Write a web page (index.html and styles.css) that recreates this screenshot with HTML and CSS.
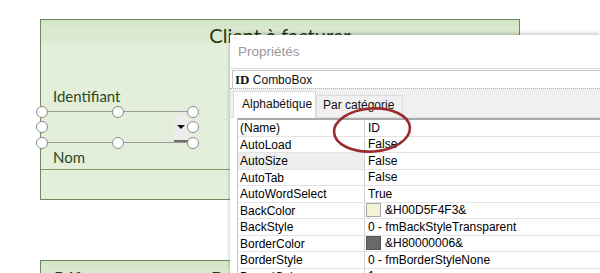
FILE: index.html
```html
<!DOCTYPE html>
<html lang="fr">
<head>
    <meta charset="UTF-8">
    <title>Client à facturer - Propriétés</title>
    <link rel="stylesheet" href="styles.css">
</head>
<body>
    <div class="designer">
        <div class="form">
            <div class="form-head">Client à facturer</div>
            <div class="form-body">
                <div class="field-label">Identifiant</div>
                <div class="combo">
                    <div class="combo-btn"><span class="arrow"></span></div>
                    <span class="handle h-tl"></span>
                    <span class="handle h-tm"></span>
                    <span class="handle h-tr"></span>
                    <span class="handle h-ml"></span>
                    <span class="handle h-mr"></span>
                    <span class="handle h-bl"></span>
                    <span class="handle h-bm"></span>
                    <span class="handle h-br"></span>
                </div>
                <div class="field-label nom">Nom</div>
            </div>
            <div class="form-foot"></div>
        </div>

        <div class="form second">
            <div class="form-head split"><span>Réf</span><span>Dé</span></div>
        </div>
    </div>

    <div class="props">
        <div class="props-title">Propriétés</div>
        <div class="props-object"><b>ID</b> ComboBox</div>
        <div class="props-tabs">
            <div class="tab active">Alphabétique</div>
            <div class="tab">Par catégorie</div>
        </div>
        <div class="grid">
            <div class="row"><div class="name">(Name)</div><div class="value">ID</div></div>
            <div class="row"><div class="name">AutoLoad</div><div class="value">False</div></div>
            <div class="row selected"><div class="name">AutoSize</div><div class="value">False</div></div>
            <div class="row"><div class="name">AutoTab</div><div class="value">False</div></div>
            <div class="row"><div class="name">AutoWordSelect</div><div class="value">True</div></div>
            <div class="row"><div class="name">BackColor</div><div class="value"><span class="swatch cream"></span>&amp;H00D5F4F3&amp;</div></div>
            <div class="row"><div class="name">BackStyle</div><div class="value">0 - fmBackStyleTransparent</div></div>
            <div class="row"><div class="name">BorderColor</div><div class="value"><span class="swatch grey"></span>&amp;H80000006&amp;</div></div>
            <div class="row"><div class="name">BorderStyle</div><div class="value">0 - fmBorderStyleNone</div></div>
            <div class="row"><div class="name">BoundColumn</div><div class="value">1</div></div>
        </div>
    </div>

    <svg class="circle-mark" width="90" height="54" viewBox="0 0 90 54">
        <ellipse cx="45" cy="27" rx="38" ry="21.5" transform="rotate(-4 45 27)" fill="none" stroke="#9c2b2c" stroke-width="2.6"/>
    </svg>
</body>
</html>
```

FILE: styles.css
```css
html, body {
    overflow: hidden;
}
body {
    margin: 0;
    background: #fff;
    font-family: "Liberation Sans", Arial, sans-serif;
    height: 273px;
}
.designer {
    padding: 19px 0 0 40px;
}
.form {
    width: 478px;
    height: 179px;
    border: 1px solid #6d8c5c;
    background: #e3eedb;
}
.form-head {
    height: 23px;
    background: linear-gradient(#d3e5c6, #d9e9cf 40%, #dcebd2);
    font-family: Lato, "Open Sans", sans-serif;
    font-size: 20px;
    line-height: 30px;
    color: #1f3712;
    text-align: center;
    overflow: hidden;
}
.form-body {
    position: relative;
    height: 126px;
    border-bottom: 1px solid #7c9a6b;
}
.field-label {
    font-family: Lato, "Open Sans", sans-serif;
    font-size: 15px;
    color: #2b4a1c;
    padding: 5px 0 0 12px;
    line-height: 18px;
    height: 26px;
    box-sizing: border-box;
}
.field-label:first-child {
    padding-top: 44px;
    height: 68px;
}
.combo {
    position: relative;
    margin-left: 2px;
    width: 150px;
    height: 32px;
    box-sizing: border-box;
    border-top: 1px solid #9a9a9a;
    border-bottom: 1px solid #9a9a9a;
}
.combo-btn {
    position: absolute;
    right: 5px;
    top: 2px;
    width: 14px;
    height: 28px;
    background: #ececec;
    border-bottom: 2px solid #6e6e6e;
    box-sizing: border-box;
    display: flex;
    align-items: center;
    justify-content: center;
}
.arrow {
    width: 0;
    height: 0;
    border-left: 4px solid transparent;
    border-right: 4px solid transparent;
    border-top: 4px solid #111;
}
.handle {
    position: absolute;
    width: 10px;
    height: 10px;
    border: 1.5px solid #8c8c8c;
    border-radius: 50%;
    background: #fff;
    margin: -6.5px 0 0 -6.5px;
}
.h-tl { left: -1px; top: 0; }
.h-tm { left: 75px; top: 0; }
.h-tr { left: 150px; top: 0; }
.h-ml { left: -1px; top: 15px; }
.h-mr { left: 150px; top: 15px; }
.h-bl { left: -1px; top: 31px; }
.h-bm { left: 75px; top: 31px; }
.h-br { left: 150px; top: 31px; }
.form-foot {
    height: 29px;
}
.form.second {
    margin-top: 60px;
}
.form-head.split {
    display: flex;
    justify-content: space-between;
    padding: 0 0 0 13px;
    width: 180px;
    font-size: 18px;
    line-height: 34px;
}

.props {
    position: absolute;
    left: 230px;
    top: 35px;
    right: 0;
    bottom: 0;
    background: #fff;
    box-shadow: -1px -2px 3px rgba(0, 0, 0, 0.18);
}
.props-title {
    height: 33px;
    padding-left: 8px;
    font-size: 13.5px;
    line-height: 34px;
    color: #9a9a9a;
    border-bottom: 1px solid #d6d6d6;
}
.props-object {
    margin-top: 1px;
    margin-left: 2px;
    height: 17px;
    border-top: 1px solid #c8c8c8;
    border-left: 1px solid #c8c8c8;
    font-size: 12px;
    line-height: 17px;
    padding-left: 2px;
    color: #111;
}
.props-object b {
    font-family: "Liberation Serif", "Times New Roman", serif;
    font-size: 13px;
}
.props-tabs {
    display: flex;
    align-items: flex-end;
    height: 28px;
    background: #f0f0f0;
    border-top: 1px dotted #b4b4b4;
    padding-left: 3px;
    border-bottom: 1px solid #e2e2e2;
}
.tab {
    height: 21px;
    padding: 0 8px 0 6px;
    font-size: 12px;
    line-height: 19px;
    color: #111;
    border: 1px solid #dcdcdc;
    border-bottom: none;
    background: #f0f0f0;
}
.tab.active {
    height: 26px;
    width: 73px;
    padding: 0 0 0 8px;
    line-height: 24px;
    background: #fff;
    position: relative;
    top: 1px;
}
.grid {
    margin-left: 7px;
    border-top: 2px solid #a9a9a9;
    border-left: 1px solid #c8c8c8;
    font-size: 12px;
    color: #000;
}
.row {
    display: flex;
    height: 16.5px;
    box-sizing: border-box;
    border-bottom: 1px solid #e4e4e4;
    line-height: 16px;
}
.name {
    width: 124px;
    padding-left: 2px;
    border-right: 1px solid #d2d2d2;
}
.row.selected .name {
    background: #efefef;
}
.value {
    flex: 1;
    padding-left: 3px;
    display: flex;
    align-items: center;
}
.swatch {
    width: 13px;
    height: 12px;
    margin: 0 4px 0 -2px;
    border: 1px solid #a8a8a8;
}
.swatch.cream {
    background: #f3f4d5;
}
.swatch.grey {
    background: #696969;
    border-color: #555;
}
.circle-mark {
    position: absolute;
    left: 327px;
    top: 103px;
}
```
